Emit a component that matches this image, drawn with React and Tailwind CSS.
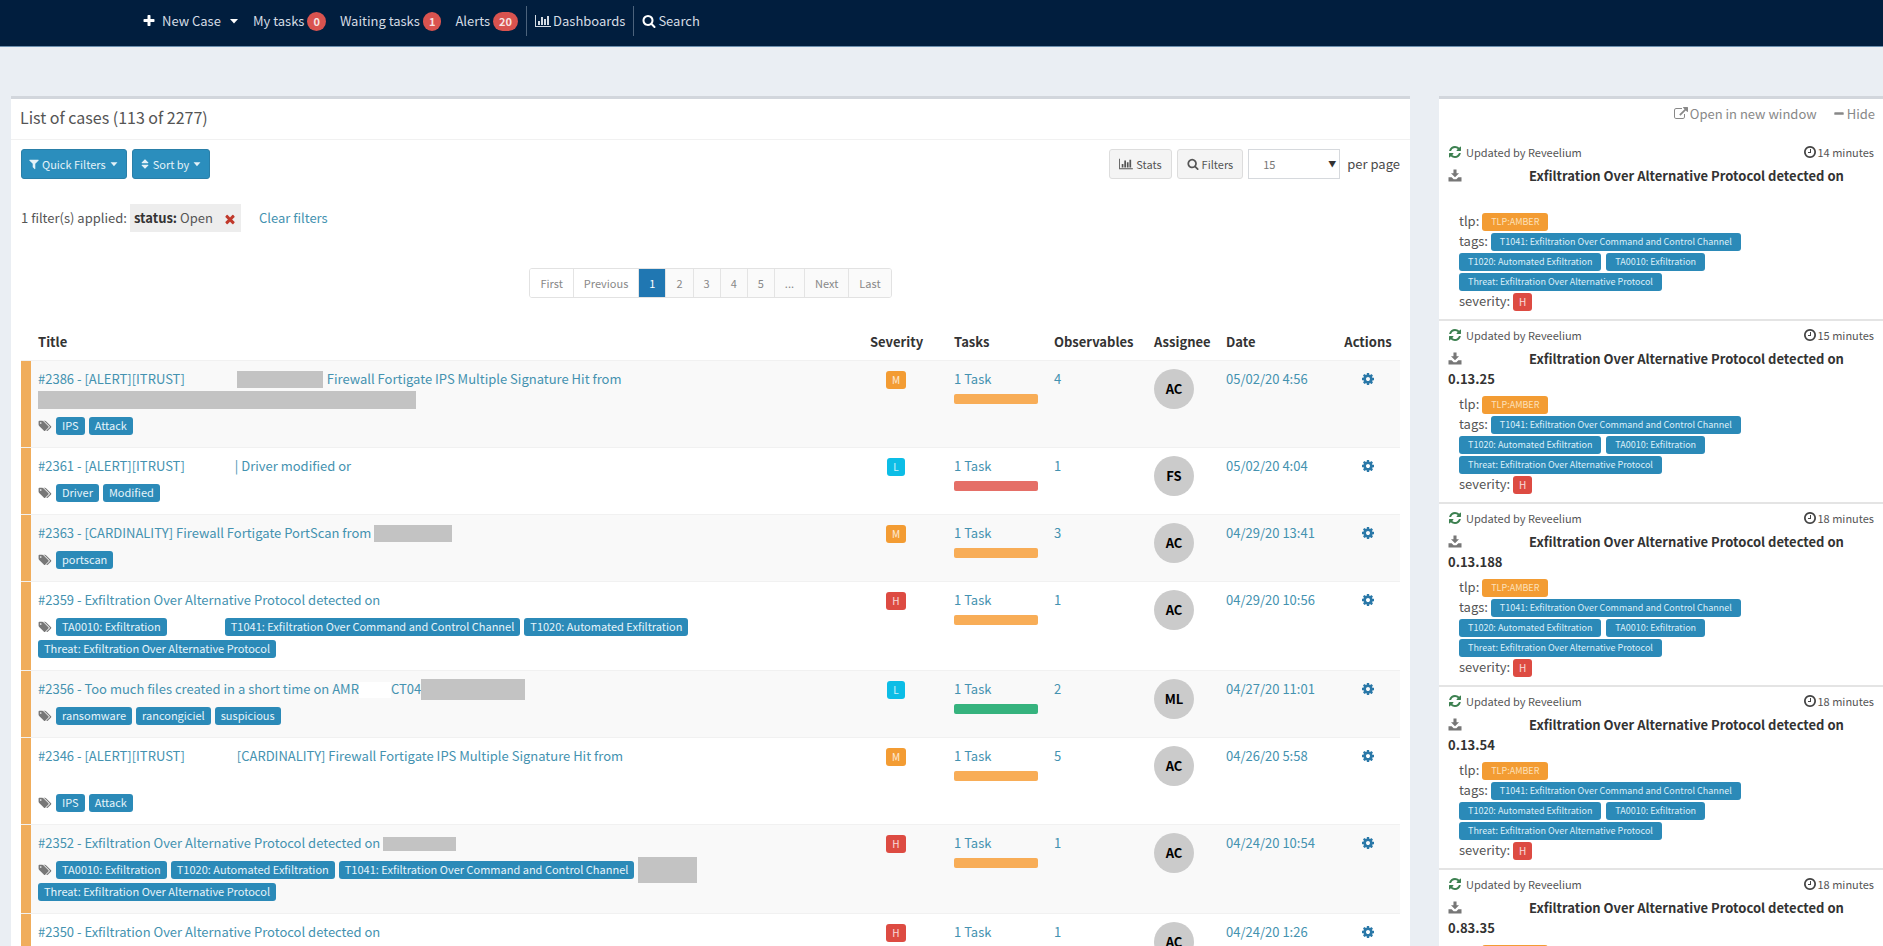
import React from "react";

// Icon outlines on the 1792 grid
const ICONS = {
  plus: "M1600 736v192q0 40-28 68t-68 28h-416v416q0 40-28 68t-68 28h-192q-40 0-68-28t-28-68v-416h-416q-40 0-68-28t-28-68v-192q0-40 28-68t68-28h416v-416q0-40 28-68t68-28h192q40 0 68 28t28 68v416h416q40 0 68 28t28 68z",
  minus: "M1600 736v192q0 40-28 68t-68 28h-1216q-40 0-68-28t-28-68v-192q0-40 28-68t68-28h1216q40 0 68 28t28 68z",
  chart: "M640 896v512h-256v-512h256zm384-512v1024h-256v-1024h256zm1024 1152v128h-2048v-1536h128v1408h1920zm-640-896v768h-256v-768h256zm384-384v1152h-256v-1152h256z",
  search: "M1216 832q0-185-131.5-316.5t-316.5-131.5-316.5 131.5-131.5 316.5 131.5 316.5 316.5 131.5 316.5-131.5 131.5-316.5zm512 832q0 52-38 90t-90 38q-54 0-90-38l-343-342q-179 124-399 124-143 0-273.5-55.5t-225-150-150-225-55.5-273.5 55.5-273.5 150-225 225-150 273.5-55.5 273.5 55.5 225 150 150 225 55.5 273.5q0 220-124 399l343 343q37 37 37 90z",
  filter: "M1595 295q17 41-14 70l-493 493v742q0 42-39 59-13 5-25 5-27 0-45-19l-256-256q-19-19-19-45v-486l-493-493q-31-29-14-70 17-39 59-39h1280q42 0 59 39z",
  sort: "M1408 1088q0 26-19 45l-448 448q-19 19-45 19t-45-19l-448-448q-19-19-19-45t19-45 45-19h896q26 0 45 19t19 45zm0-384q0 26-19 45t-45 19h-896q-26 0-45-19t-19-45 19-45l448-448q19-19 45-19t45 19l448 448q19 19 19 45z",
  times: "M1490 1194q0 40-28 68l-136 136q-28 28-68 28t-68-28l-294-294-294 294q-28 28-68 28t-68-28l-136-136q-28-28-28-68t28-68l294-294-294-294q-28-28-28-68t28-68l136-136q28-28 68-28t68 28l294 294 294-294q28-28 68-28t68 28l136 136q28 28 28 68t-28 68l-294 294 294 294q28 28 28 68z",
  external: "M1408 928v320q0 119-84.5 203.5t-203.5 84.5h-832q-119 0-203.5-84.5t-84.5-203.5v-832q0-119 84.5-203.5t203.5-84.5h704q14 0 23 9t9 23v64q0 14-9 23t-23 9h-704q-66 0-113 47t-47 113v832q0 66 47 113t113 47h832q66 0 113-47t47-113v-320q0-14 9-23t23-9h64q14 0 23 9t9 23zm384-864v512q0 26-19 45t-45 19-45-19l-176-176-652 652q-10 10-23 10t-23-10l-114-114q-10-10-10-23t10-23l652-652-176-176q-19-19-19-45t19-45 45-19h512q26 0 45 19t19 45z",
  clock: "M1024 544v448q0 14-9 23t-23 9h-320q-14 0-23-9t-9-23v-64q0-14 9-23t23-9h224v-352q0-14 9-23t23-9h64q14 0 23 9t9 23zm416 352q0-148-73-273t-198-198-273-73-273 73-198 198-73 273 73 273 198 198 273 73 273-73 198-198 73-273zm224 0q0 209-103 385.5t-279.5 279.5-385.5 103-385.5-103-279.5-279.5-103-385.5 103-385.5 279.5-279.5 385.5-103 385.5 103 279.5 279.5 103 385.5z",
  refresh: "M1639 1056q0 5-1 7-64 268-268 434.5t-478 166.5q-146 0-282.5-55t-243.5-157l-129 129q-19 19-45 19t-45-19-19-45v-448q0-26 19-45t45-19h448q26 0 45 19t19 45-19 45l-137 137q71 66 161 102t187 36q134 0 250-65t186-179q11-17 53-117 8-23 30-23h192q13 0 22.5 9.5t9.5 22.5zm25-800v448q0 26-19 45t-45 19h-448q-26 0-45-19t-19-45 19-45l138-138q-148-137-349-137-134 0-250 65t-186 179q-11 17-53 117-8 23-30 23h-199q-13 0-22.5-9.5t-9.5-22.5v-7q65-268 270-434.5t480-166.5q146 0 284 55.5t245 156.5l130-129q19-19 45-19t45 19 19 45z",
  cog: "M1152 896q0-106-75-181t-181-75-181 75-75 181 75 181 181 75 181-75 75-181zm512-109v222q0 12-8 23t-20 13l-185 28q-19 54-39 91 35 50 107 138 10 12 10 25t-9 23q-27 37-99 108t-94 71q-12 0-26-9l-138-108q-44 23-91 38-16 136-29 186-7 28-36 28h-222q-14 0-24.5-8.5t-11.5-21.5l-28-184q-49-16-90-37l-141 107q-10 9-25 9-14 0-25-11-126-114-165-168-7-10-7-23 0-12 8-23 15-21 51-66.5t54-70.5q-27-50-41-99l-183-27q-13-2-21-12.5t-8-23.5v-222q0-12 8-23t19-13l186-28q14-46 39-92-40-57-107-138-10-12-10-24 0-10 9-23 26-36 98.5-107.5t94.5-71.5q13 0 26 10l138 107q44-23 91-38 16-136 29-186 7-28 36-28h222q14 0 24.5 8.5t11.5 21.5l28 184q49 16 90 37l142-107q9-9 24-9 13 0 25 10 129 119 165 170 7 8 7 22 0 12-8 23-15 21-51 66.5t-54 70.5q26 50 41 98l183 28q13 2 21 12.5t8 23.5z",
  tags: "M512 448q0-53-37.5-90.5t-90.5-37.5-90.5 37.5-37.5 90.5 37.5 90.5 90.5 37.5 90.5-37.5 37.5-90.5zm1067 576q0 53-37 90l-491 492q-39 37-91 37-53 0-90-37l-715-716q-38-37-64.5-101t-26.5-117v-416q0-52 38-90t90-38h416q53 0 117 26.5t102 64.5l715 714q37 39 37 91zm384 0q0 53-37 90l-491 492q-39 37-91 37-36 0-59-14t-53-45l470-470q37-37 37-90 0-52-37-91l-715-714q-38-38-102-64.5t-117-26.5h224q53 0 117 26.5t102 64.5l715 714q37 39 37 91z",
  caret: "M384 640h1024l-512 576z",
  save: "M700 64h392v480h320l-516 500-516-500h320zM64 1060h400l260 250h344l260-250h400v540h-1664z",
};

const WIDE = ["chart", "tags"];

const Icon = ({ name, className = "w-3 h-3" }) => (
  <svg
    viewBox={WIDE.includes(name) ? "0 0 2048 1792" : "0 0 1792 1792"}
    className={`inline-block shrink-0 fill-current ${className}`}
    aria-hidden="true"
  >
    <path d={ICONS[name]} />
  </svg>
);

const T1041 = "T1041: Exfiltration Over Command and Control Channel";
const T1020 = "T1020: Automated Exfiltration";
const TA0010 = "TA0010: Exfiltration";
const THREAT = "Threat: Exfiltration Over Alternative Protocol";

// Negative block margins keep tall masks from growing the text line
const Masked = ({ className }) => <span className={`-my-2 inline-block bg-[#c3c3c3] align-middle ${className}`} />;
const Gap = ({ className }) => <span className={`-my-2 inline-block align-middle ${className}`} />;

const cases = [
  {
    id: 2386,
    title: (
      <>
        #2386 - [ALERT][ITRUST]
        <Gap className="w-[52px]" />
        <Masked className="w-[86px] h-[17px] mr-1" />
        Firewall Fortigate IPS Multiple Signature Hit from
        <br />
        <Masked className="w-[378px] h-[18px]" />
      </>
    ),
    tags: ["IPS", "Attack"],
    severity: "M", bar: "bg-[#f8ad57]", observables: 4, assignee: "AC", date: "05/02/20 4:56",
  },
  {
    id: 2361,
    title: (
      <>
        #2361 - [ALERT][ITRUST]
        <Gap className="w-[50px]" />| Driver modified or
      </>
    ),
    tags: ["Driver", "Modified"],
    severity: "L", bar: "bg-[#e56f67]", observables: 1, assignee: "FS", date: "05/02/20 4:04",
  },
  {
    id: 2363,
    title: (
      <>
        #2363 - [CARDINALITY] Firewall Fortigate PortScan from{" "}
        <Masked className="w-[78px] h-[17px]" />
      </>
    ),
    tags: ["portscan"],
    severity: "M", bar: "bg-[#f8ad57]", observables: 3, assignee: "AC", date: "04/29/20 13:41",
  },
  {
    id: 2359,
    title: "#2359 - Exfiltration Over Alternative Protocol detected on",
    tags: [TA0010, "gap", T1041, T1020, THREAT],
    severity: "H", bar: "bg-[#f8ad57]", observables: 1, assignee: "AC", date: "04/29/20 10:56",
  },
  {
    id: 2356,
    title: (
      <>
        #2356 - Too much files created in a short time on AMR
        <Gap className="w-[32px] h-4 bg-white" />
        CT04
        <Masked className="w-[104px] h-[21px]" />
      </>
    ),
    tags: ["ransomware", "rancongiciel", "suspicious"],
    severity: "L", bar: "bg-[#36b37e]", observables: 2, assignee: "ML", date: "04/27/20 11:01",
  },
  {
    id: 2346,
    title: (
      <>
        #2346 - [ALERT][ITRUST]
        <Gap className="w-[52px]" />
        [CARDINALITY] Firewall Fortigate IPS Multiple Signature Hit from
        <br />
        &nbsp;
      </>
    ),
    tags: ["IPS", "Attack"],
    severity: "M", bar: "bg-[#f8ad57]", observables: 5, assignee: "AC", date: "04/26/20 5:58",
  },
  {
    id: 2352,
    title: (
      <>
        #2352 - Exfiltration Over Alternative Protocol detected on{" "}
        <Masked className="w-[73px] h-[14px]" />
      </>
    ),
    tags: [TA0010, T1020, T1041, "mask", THREAT],
    severity: "H", bar: "bg-[#f8ad57]", observables: 1, assignee: "AC", date: "04/24/20 10:54",
  },
  {
    id: 2350,
    title: "#2350 - Exfiltration Over Alternative Protocol detected on",
    tags: [],
    severity: "H", bar: "bg-[#f8ad57]", observables: 1, assignee: "AC", date: "04/24/20 1:26",
  },
];

const alerts = [
  { id: 1, time: "14 minutes", host: "" },
  { id: 2, time: "15 minutes", host: "0.13.25" },
  { id: 3, time: "18 minutes", host: "0.13.188" },
  { id: 4, time: "18 minutes", host: "0.13.54" },
  { id: 5, time: "18 minutes", host: "0.83.35" },
];

const severityColors = {
  L: "bg-[#0cbde6]",
  M: "bg-[#f39c33]",
  H: "bg-[#dd4b42]",
};

const Severity = ({ level }) => (
  <span className={`-my-1 inline-block h-[18px] rounded-[3px] px-[6px] text-[10px] leading-[18px] text-white/80 align-middle ${severityColors[level]}`}>
    {level}
  </span>
);

const CaseTag = ({ children }) => {
  if (children === "gap") return <span className="w-[50px]" />;
  if (children === "mask") return <span className="-my-1 h-[26px] w-[59px] bg-[#c3c3c3]" />;
  return (
    <span className="h-[18px] rounded-[3px] bg-[#2b8ab8] px-[6px] text-[11px] leading-[17px] text-[#e6f4fa]">
      {children}
    </span>
  );
};

const AlertTag = ({ children, className = "bg-[#2b8ab8] text-[#dceff8]" }) => (
  <span className={`-my-1 inline-block h-[18px] rounded-[3px] px-[9px] text-[9px] leading-[17px] align-middle ${className}`}>
    {children}
  </span>
);

const Badge = ({ children }) => (
  <span className="rounded-full bg-[#d9534f] px-[6px] text-[11px] font-bold leading-[19px] text-[#f7e3e2]">{children}</span>
);

const Navbar = () => (
  <nav className="h-[47px] border-b border-[#6c8fae] bg-[#011e3e] text-[13px] text-[#d5dce4]">
    <div className="flex h-[42px] items-center pl-[142px] leading-5">
      <a href="#new" className="flex items-center">
        <Icon name="plus" className="w-[14px] h-[14px] text-white" />
        <span className="ml-[6px]">New Case</span>
        <Icon name="caret" className="ml-[6px] w-[14px] h-[14px] text-white" />
      </a>
      <a href="#my" className="ml-3 flex items-center gap-[3px]">My tasks <Badge>0</Badge></a>
      <a href="#waiting" className="ml-[14px] flex items-center gap-[3px]">Waiting tasks <Badge>1</Badge></a>
      <a href="#alerts" className="ml-[14px] flex items-center gap-[3px]">Alerts <Badge>20</Badge></a>
      <a href="#dashboards" className="ml-2 flex h-[30px] items-center gap-[2px] border-l border-[#4c637c] pl-2">
        <Icon name="chart" className="w-4 h-[14px]" />
        Dashboards
      </a>
      <a href="#search" className="ml-2 flex h-[30px] items-center gap-[2px] border-l border-[#4c637c] pl-2">
        <Icon name="search" className="w-[14px] h-[14px] text-white" />
        Search
      </a>
    </div>
  </nav>
);

const Toolbar = () => (
  <div className="flex items-center gap-[5px] text-[11px]">
    <button type="button" className="flex h-[30px] items-center gap-[2px] rounded-[3px] border border-[#2a7fa8] bg-[#2b8ebd] px-[6px] text-[#e4f2f8]">
      <Icon name="filter" />
      Quick Filters
      <Icon name="caret" />
    </button>
    <button type="button" className="flex h-[30px] items-center gap-[2px] rounded-[3px] border border-[#2a7fa8] bg-[#2b8ebd] px-[6px] text-[#e4f2f8]">
      <Icon name="sort" />
      Sort by
      <Icon name="caret" />
    </button>
    <button type="button" className="ml-auto flex h-[30px] items-center gap-[3px] rounded-[3px] border border-[#ddd] bg-[#f4f4f4] px-[9px] text-[#555]">
      <Icon name="chart" className="w-[14px] h-3" />
      Stats
    </button>
    <button type="button" className="flex h-[30px] items-center gap-[3px] rounded-[3px] border border-[#ddd] bg-[#f4f4f4] px-[9px] text-[#555]">
      <Icon name="search" />
      Filters
    </button>
    <div className="relative">
      <select id="per-page" defaultValue="15" className="h-[30px] w-[92px] appearance-none rounded-none border border-[#d6d9dd] bg-white pl-[14px] text-[#777]">
        <option>15</option>
        <option>30</option>
        <option>50</option>
      </select>
      <span className="pointer-events-none absolute right-1 top-[9px] text-[8px] leading-3 text-[#333]">▼</span>
    </div>
    <label htmlFor="per-page" className="ml-[2px] text-[13px] text-[#4a4a4a]">per page</label>
  </div>
);

const pages = [
  ["First", "bg-white"],
  ["Previous", "bg-white"],
  ["1", "bg-[#2077b2] text-white"],
  ["2", "bg-[#fafafa]"],
  ["3", "bg-[#fafafa]"],
  ["4", "bg-[#fafafa]"],
  ["5", "bg-[#fafafa]"],
  ["...", "bg-[#fafafa]"],
  ["Next", "bg-[#fafafa]"],
  ["Last", "bg-[#fafafa]"],
];

const Pagination = () => (
  <div className="mt-9 flex justify-center">
    <div className="flex divide-x divide-[#e4e4e4] overflow-hidden rounded-[3px] border border-[#e2e2e2] text-[11px] leading-7 text-[#888]">
      {pages.map(([label, style]) => (
        <button key={label} type="button" className={`px-[10px] ${style}`}>{label}</button>
      ))}
    </div>
  </div>
);

const CaseTable = () => (
  <table className="mt-[26px] w-full table-fixed text-left text-[13px] leading-5 text-[#4492b0]">
    <colgroup>
      <col className="w-[10px]" />
      <col />
      <col className="w-[84px]" />
      <col className="w-[100px]" />
      <col className="w-[100px]" />
      <col className="w-[72px]" />
      <col className="w-[110px]" />
      <col className="w-[64px]" />
    </colgroup>
    <thead>
      <tr className="h-9 text-[#333]">
        <th />
        <th className="pl-[7px] font-bold">Title</th>
        <th className="font-bold">Severity</th>
        <th className="font-bold">Tasks</th>
        <th className="font-bold">Observables</th>
        <th className="font-bold">Assignee</th>
        <th className="font-bold">Date</th>
        <th className="text-center font-bold">Actions</th>
      </tr>
    </thead>
    <tbody>
      {cases.map((c, i) => (
        <tr key={c.id} className={`border-t border-[#f1f1f1] align-top ${i % 2 ? "bg-white" : "bg-[#f9f9f9]"}`}>
          <td className="bg-[#f0ad5c]" />
          <td className="pl-[7px] pt-2 pb-3">
            <a href={`#case-${c.id}`} className="block">{c.title}</a>
            {c.tags.length > 0 && (
              <div className="mt-2 flex max-w-[680px] flex-wrap items-center gap-1">
                <Icon name="tags" className="w-[14px] h-3 text-[#777]" />
                {c.tags.map((t) => (
                  <CaseTag key={t}>{t}</CaseTag>
                ))}
              </div>
            )}
          </td>
          <td className="pt-2 pr-8 text-center"><Severity level={c.severity} /></td>
          <td className="pt-2">
            <a href={`#tasks-${c.id}`} className="block">1 Task</a>
            <div className={`mt-[5px] h-[10px] w-[84px] rounded-[2px] ${c.bar}`} />
          </td>
          <td className="pt-2">{c.observables}</td>
          <td className="pt-2">
            <span className="flex h-10 w-10 items-center justify-center rounded-full bg-[#cbcbcb] font-bold text-black">{c.assignee}</span>
          </td>
          <td className="whitespace-nowrap pt-2">{c.date}</td>
          <td className="pt-2 text-center">
            <button type="button" aria-label="Actions" className="flex h-5 w-full items-center justify-center text-[#2a78a8]">
              <Icon name="cog" className="w-[14px] h-[14px]" />
            </button>
          </td>
        </tr>
      ))}
    </tbody>
  </table>
);

const AlertItem = ({ alert }) => (
  <li className="border-b-2 border-[#e4e4e4] px-[9px] pt-1 pb-2 text-[13px] leading-5 text-[#555]">
    <div className="flex items-center text-[11px]">
      <Icon name="refresh" className="w-[14px] h-[14px] text-[#3c8050]" />
      <span className="ml-1">Updated by Reveelium</span>
      <Icon name="clock" className="ml-auto w-[14px] h-[14px] text-[#444]" />
      <span className="ml-[1px]">{alert.time}</span>
    </div>
    <div className="mt-1 flex items-center font-bold text-[#333]">
      <Icon name="save" className="w-[14px] h-[14px] text-[#777]" />
      <span className="ml-[67px]">Exfiltration Over Alternative Protocol detected on</span>
    </div>
    <div className="h-5 font-bold text-[#333]">{alert.host}</div>
    <div className="mt-[5px] w-[320px] pl-[11px]">
      <div className="h-5">tlp: <AlertTag className="bg-[#f39c33] text-[#fce0ba]">TLP:AMBER</AlertTag></div>
      <div>
        tags: <AlertTag>{T1041}</AlertTag> <AlertTag>{T1020}</AlertTag>{" "}
        <AlertTag className="ml-[2px] bg-[#2b8ab8] text-[#dceff8]">{TA0010}</AlertTag> <AlertTag>{THREAT}</AlertTag>
      </div>
      <div className="h-5">severity: <Severity level="H" /></div>
    </div>
  </li>
);

export default function App() {
  return (
    <div className="h-screen overflow-hidden bg-[#eaeef3] font-['Noto_Sans_CJK_SC',sans-serif]">
      <Navbar />
      <main className="mt-[49px] flex gap-[29px] pl-[11px]">
        <section className="min-w-0 flex-1 border-t-[3px] border-[#d2d6dc] bg-white">
          <h1 className="border-b border-[#f1f1f1] px-[9px] pt-[6px] pb-[10px] text-[16px] leading-6 text-[#555]">
            List of cases (113 of 2277)
          </h1>
          <div className="px-[10px] pt-[9px]">
            <Toolbar />
            <div className="mt-[25px] flex h-7 items-center text-[13px] text-[#555]">
              1 filter(s) applied:
              <span className="ml-[3px] flex h-7 items-center bg-[#ededed] px-1">
                <strong className="mr-[3px] text-[#333]">status:</strong>Open
                <button type="button" aria-label="Remove filter" className="ml-[10px] text-[#c0392b]">
                  <Icon name="times" className="block w-[14px] h-[14px]" />
                </button>
              </span>
              <a href="#clear" className="ml-[18px] text-[#4492b0]">Clear filters</a>
            </div>
            <Pagination />
            <CaseTable />
          </div>
        </section>
        <aside className="w-[444px] shrink-0 border-t-[3px] border-[#d2d6dc] bg-white">
          <div className="flex h-[39px] items-center justify-end gap-4 pr-2 pb-[10px] text-[13px] text-[#888]">
            <a href="#window" className="flex items-center gap-[2px]"><Icon name="external" className="w-[14px] h-[14px]" />Open in new window</a>
            <a href="#hide" className="flex items-center gap-[2px]"><Icon name="minus" />Hide</a>
          </div>
          <ul>
            {alerts.map((a) => <AlertItem key={a.id} alert={a} />)}
          </ul>
        </aside>
      </main>
    </div>
  );
}
